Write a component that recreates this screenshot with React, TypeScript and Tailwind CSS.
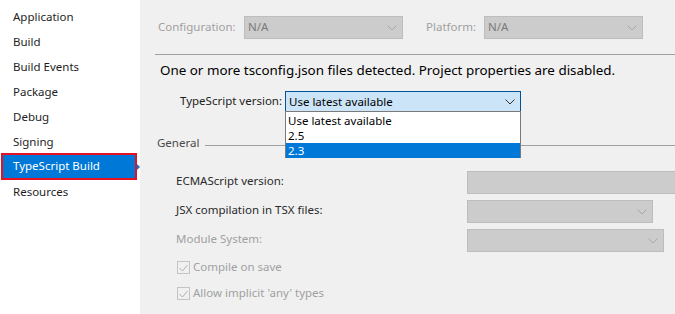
import React from "react";

const font = { fontFamily: '"Noto Sans", "Open Sans", sans-serif' };

function Chevron({ color }: { color: string }) {
  return (
    <svg width="10" height="6" viewBox="0 0 10 6" className="shrink-0">
      <polyline points="0.5,0.5 5,5 9.5,0.5" fill="none" stroke={color} strokeWidth="1" />
    </svg>
  );
}

function DisabledSelect({ w, text, chevron = true, full = false }: { w?: string; text?: string; chevron?: boolean; full?: boolean }) {
  return (
    <div
      className={`h-[23px] bg-[#cccccc] border border-[#bdbdbd] flex items-center justify-between pl-[3px] pr-[5px] ${full ? "flex-1 border-r-0" : ""} ${w ?? ""}`}
    >
      <span className="text-[11.5px] text-[#7a7a7a] leading-none pb-[1px]">{text ?? ""}</span>
      {chevron && <Chevron color="#a8a8a8" />}
    </div>
  );
}

function Check() {
  return (
    <div className="w-[13px] h-[13px] shrink-0 border border-[#c4c4c4] flex items-center justify-center">
      <svg width="9" height="8" viewBox="0 0 9 8">
        <polyline points="0.5,4 3.5,7 8.5,1" fill="none" stroke="#b0b0b0" strokeWidth="1" />
      </svg>
    </div>
  );
}

export default function App() {
  const items = ["Application", "Build", "Build Events", "Package", "Debug", "Signing"];
  return (
    <div className="w-[675px] h-[314px] flex overflow-hidden bg-[#f0f0f0] whitespace-nowrap" style={font}>
      {/* Sidebar */}
      <div className="w-[140px] shrink-0 bg-white pt-[5px]">
        {items.map((t) => (
          <div key={t} className="h-[25px] flex items-center pl-[13px] pb-[2px] text-[11.5px] text-[#1e1e1e]">
            {t}
          </div>
        ))}
        <div className="relative mt-[-2px] mb-0 h-[27px] ml-[1px] w-[136px] border-2 border-[#e81123] bg-[#0078d7] flex items-center pl-[10px] pb-[1px] text-[11.5px] text-white">
          TypeScript Build
          <div className="absolute right-[-5px] top-[9px] w-0 h-0 border-y-[3px] border-y-transparent border-l-[3px] border-l-[#0078d7]" />
        </div>
        <div className="h-[25px] flex items-center pl-[13px] pb-[2px] text-[11.5px] text-[#1e1e1e]">Resources</div>
      </div>

      {/* Main */}
      <div className="flex-1 flex flex-col min-w-0">
        <div className="pt-[16px] flex items-center">
          <div className="ml-[18px] w-[86px] pb-[1px] text-[11.5px] text-[#a0a0a0]">Configuration:</div>
          <DisabledSelect w="w-[159px]" text="N/A" />
          <div className="ml-[23px] w-[58px] pb-[1px] text-[11.5px] text-[#a0a0a0]">Platform:</div>
          <DisabledSelect w="w-[159px]" text="N/A" />
        </div>
        <div className="mt-[15px] ml-[15px] h-px bg-[#a0a0a0]" />
        <div className="mt-[5px] ml-[20px] text-[13.4px] leading-[20px] text-black">
          One or more tsconfig.json files detected. Project properties are disabled.
        </div>
        <div className="mt-[11px] flex items-center h-[21px]">
          <div className="ml-[40px] w-[105px] pb-[2px] text-[11.5px] text-[#1e1e1e]">TypeScript version:</div>
          <div className="relative w-[236px] h-[21px] bg-[#cce4f7] border border-[#005499] flex items-center justify-between pl-[3px] pr-[5px] z-10">
            <span className="text-[11.5px] text-black leading-none">Use latest available</span>
            <Chevron color="#333333" />
            <div className="absolute left-[-1px] top-[19px] w-[236px] h-[47px] bg-white border border-[#7a7a7a] pt-[1px] flex flex-col text-[11.5px] leading-[15px] text-black">
              <div className="h-[15px] flex items-center pl-[2px]">Use latest available</div>
              <div className="h-[15px] flex items-center pl-[2px]">2.5</div>
              <div className="h-[15px] flex items-center pl-[2px] bg-[#0078d7] text-white">2.3</div>
            </div>
          </div>
        </div>
        <div className="mt-[24px] h-[18px] flex items-center">
          <div className="ml-[17px] w-[48px] pb-[4px] text-[11.5px] text-[#4a4a4a]">General</div>
          <div className="flex-1 h-px bg-[#a0a0a0]" />
        </div>
        <div className="mt-[17px] flex items-center h-[23px]">
          <div className="ml-[36px] w-[291px] shrink-0 pb-[3px] text-[11.5px] text-[#2a2a2a]">ECMAScript version:</div>
          <DisabledSelect full chevron={false} />
        </div>
        <div className="mt-[6px] flex items-center h-[23px]">
          <div className="ml-[36px] w-[291px] shrink-0 pb-[3px] text-[11.5px] text-[#2a2a2a]">JSX compilation in TSX files:</div>
          <DisabledSelect w="w-[186px]" />
        </div>
        <div className="mt-[6px] flex items-center h-[23px]">
          <div className="ml-[36px] w-[291px] shrink-0 pb-[3px] text-[11.5px] text-[#a0a0a0]">Module System:</div>
          <DisabledSelect w="w-[197px]" />
        </div>
        <div className="mt-[9px] flex items-center h-[13px] ml-[37px] gap-[3px]">
          <Check />
          <span className="text-[11.5px] pb-[2px] text-[#a0a0a0]">Compile on save</span>
        </div>
        <div className="mt-[13px] flex items-center h-[13px] ml-[37px] gap-[3px]">
          <Check />
          <span className="text-[11.5px] pb-[2px] text-[#a0a0a0]">Allow implicit 'any' types</span>
        </div>
      </div>
    </div>
  );
}
